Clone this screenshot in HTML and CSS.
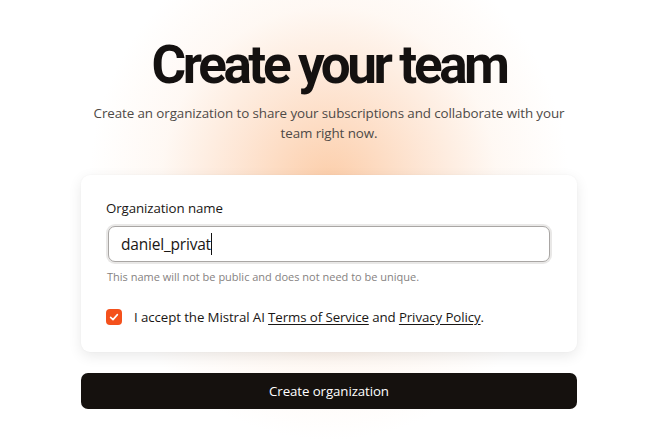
FILE: index.html
```html
<!DOCTYPE html>
<html lang="en">
<head>
<meta charset="utf-8">
<title>Create your team</title>
<link rel="stylesheet" href="styles.css">
</head>
<body>
<div class="glow"></div>
<main class="page">
  <header class="intro">
    <h1 class="title">Create your team</h1>
    <p class="subtitle">Create an organization to share your subscriptions and collaborate with your team right now.</p>
  </header>
  <form class="card">
    <label class="label" for="org">Organization name</label>
    <div class="field-ring">
      <div class="field"><span class="value">daniel_privat</span><span class="caret"></span></div>
    </div>
    <p class="hint">This name will not be public and does not need to be unique.</p>
    <div class="accept">
      <span class="checkbox">
        <svg width="10" height="10" viewBox="0 0 10 10"><path d="M1.6 5.3 L4 7.6 L8.4 2.6" fill="none" stroke="#fff" stroke-width="1.6" stroke-linecap="round" stroke-linejoin="round"/></svg>
      </span>
      <span class="accept-text">I accept the Mistral AI <a class="link">Terms of Service</a> and <a class="link">Privacy Policy</a>.</span>
    </div>
  </form>
  <button class="submit" type="button">Create organization</button>
</main>
</body>
</html>
```
FILE: styles.css
```css
html, body {
  margin: 0;
  height: 100%;
}
body {
  background: #ffffff;
  font-family: "Open Sans", "Noto Sans", sans-serif;
  color: #171310;
  overflow: hidden;
  position: relative;
  padding-left: 11px;
  box-sizing: border-box;
}
.glow {
  position: absolute;
  left: 0;
  top: 0;
  width: 100%;
  height: 100%;
  background: radial-gradient(ellipse 240px 255px at 329px 185px, rgba(252, 203, 165, 0.95) 0%, rgba(253, 220, 196, 0.7) 40%, rgba(254, 236, 222, 0.35) 70%, rgba(255, 255, 255, 0) 100%);
}
.page {
  position: relative;
  width: 496px;
  margin: 0 auto;
  padding-top: 35px;
  display: flex;
  flex-direction: column;
}
.intro {
  text-align: center;
}
.title {
  margin: 0;
  font-family: Roboto, "Open Sans", sans-serif;
  font-size: 53px;
  line-height: 60px;
  font-weight: 700;
  letter-spacing: -3.4px;
  color: #141110;
}
.subtitle {
  margin: 8px auto 0;
  width: 490px;
  font-size: 13.4px;
  line-height: 20px;
  color: #4e4a47;
  letter-spacing: -0.1px;
}
.card {
  margin-top: 32px;
  background: #fff;
  border-radius: 9px;
  box-shadow: 0 4px 14px rgba(0, 0, 0, 0.09), 0 0 2px rgba(0, 0, 0, 0.04);
  padding: 24px 25px 26px;
  display: flex;
  flex-direction: column;
}
.label {
  font-size: 13.3px;
  line-height: 18px;
  color: #1a1715;
  letter-spacing: -0.1px;
}
.field-ring {
  margin-top: 7px;
  border-radius: 9px;
  background: #e9e8e7;
  padding: 2px;
}
.field {
  height: 36px;
  border: 1px solid #a9a6a4;
  border-radius: 7px;
  background: #fff;
  display: flex;
  align-items: center;
  padding-left: 12px;
  font-size: 15.5px;
  color: #1a1715;
  box-sizing: border-box;
}
.value {
  letter-spacing: -0.2px;
}
.caret {
  display: inline-block;
  width: 1px;
  height: 22px;
  background: #111;
}
.hint {
  margin: 5px 0 0 1px;
  font-size: 11px;
  line-height: 15px;
  color: #86827f;
}
.accept {
  margin-top: 24px;
  display: flex;
  align-items: center;
  gap: 12px;
  font-size: 13.3px;
  color: #1a1715;
  letter-spacing: -0.1px;
}
.checkbox {
  width: 16px;
  height: 16px;
  border-radius: 4px;
  background: #f4511c;
  display: flex;
  align-items: center;
  justify-content: center;
  flex: none;
}
.link {
  color: #1a1715;
  text-decoration: underline;
  text-underline-offset: 2px;
}
.submit {
  margin-top: 21px;
  height: 36px;
  border: 0;
  border-radius: 7px;
  background: #15110e;
  color: #fff;
  font-family: inherit;
  font-size: 13.3px;
  letter-spacing: -0.1px;
}
```
